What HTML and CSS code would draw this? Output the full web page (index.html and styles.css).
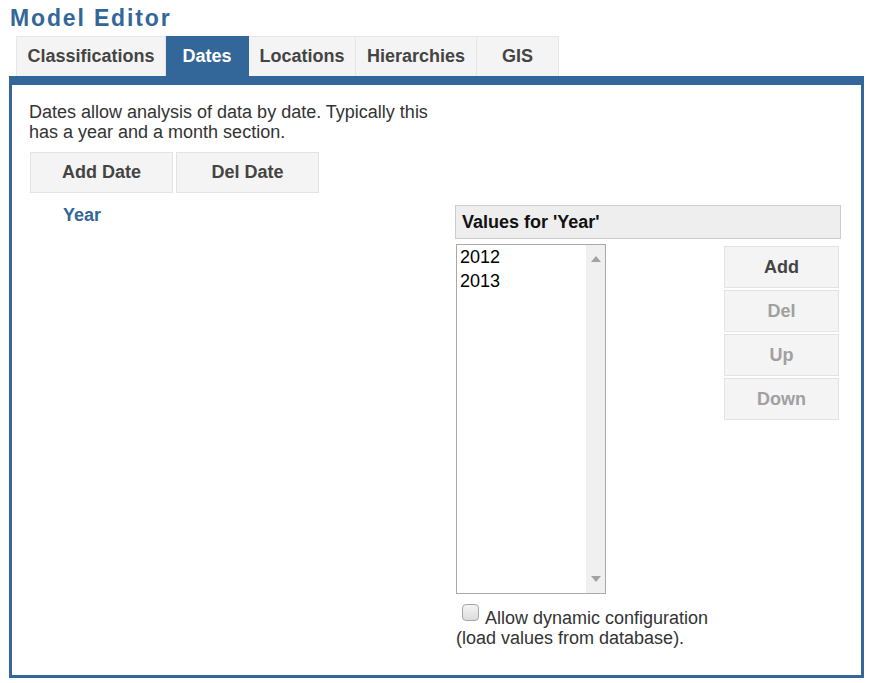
FILE: index.html
```html
<!DOCTYPE html>
<html>
<head>
<meta charset="utf-8">
<link rel="stylesheet" href="styles.css">
</head>
<body>
<h1 class="title">Model Editor</h1>
<div class="tabs">
  <div class="tab w-class">Classifications</div>
  <div class="tab tab-active w-dates">Dates</div>
  <div class="tab w-loc">Locations</div>
  <div class="tab w-hier">Hierarchies</div>
  <div class="tab w-gis">GIS</div>
</div>
<div class="panel">
  <div class="left">
    <p class="intro">Dates allow analysis of data by date. Typically this has a year and a month section.</p>
    <div class="btn-row">
      <div class="btn btn-date">Add Date</div>
      <div class="btn btn-date">Del Date</div>
    </div>
    <div class="year-link">Year</div>
  </div>
  <div class="right">
    <div class="values-head">Values for 'Year'</div>
    <div class="values-body">
      <div class="listbox">
        <div class="list-items">
          <div class="item">2012</div>
          <div class="item">2013</div>
        </div>
        <div class="scrollbar">
          <svg class="arrow" width="10" height="6" viewBox="0 0 10 6"><polygon points="0,6 10,6 5,0" fill="#a3a3a3"/></svg>
          <svg class="arrow" width="10" height="6" viewBox="0 0 10 6"><polygon points="0,0 10,0 5,6" fill="#a3a3a3"/></svg>
        </div>
      </div>
      <div class="side-btns">
        <div class="btn btn-side">Add</div>
        <div class="btn btn-side disabled">Del</div>
        <div class="btn btn-side disabled">Up</div>
        <div class="btn btn-side disabled">Down</div>
      </div>
    </div>
    <div class="dyn">
      <div class="dyn-line"><span class="checkbox"></span><span class="dyn-label">Allow dynamic configuration</span></div>
      <div>(load values from database).</div>
    </div>
  </div>
</div>
</body>
</html>
```
FILE: styles.css
```css
* { box-sizing: border-box; }
body {
  margin: 0;
  font-family: "Liberation Sans", Arial, sans-serif;
  font-size: 18px;
  color: #333;
  background: #fff;
}
.title {
  margin: 0;
  padding: 5px 0 0 10px;
  height: 31px;
  font-size: 23px;
  line-height: 26px;
  font-weight: bold;
  letter-spacing: 1.85px;
  color: #336699;
}
.tabs {
  display: flex;
  margin: 5px 0 0 16px;
  height: 40px;
}
.tab {
  height: 40px;
  display: flex;
  align-items: center;
  justify-content: center;
  background: #f4f4f4;
  border: 1px solid #e6e6e6;
  border-bottom: none;
  border-left: none;
  font-weight: bold;
  color: #444;
}
.tab:first-child { border-left: 1px solid #e6e6e6; }
.tab-active {
  background: #336699;
  border-color: #336699;
  color: #fff;
}
.w-class { width: 150px; }
.w-dates { width: 83px; }
.w-loc { width: 107px; }
.w-hier { width: 121px; }
.w-gis { width: 82px; }
.panel {
  margin-left: 9px;
  width: 855px;
  height: 602px;
  border: 3px solid #336699;
  border-top: 9px solid #336699;
  display: flex;
  padding: 17px 0 0 17px;
}
.left {
  width: 426px;
  flex: none;
}
.intro {
  margin: 0;
  width: 412px;
  line-height: 20px;
  color: #333;
}
.btn-row {
  display: flex;
  gap: 3px;
  margin: 10px 0 0 1px;
}
.btn {
  display: flex;
  align-items: center;
  justify-content: center;
  background: #f4f4f4;
  border: 1px solid #e3e3e3;
  font-weight: bold;
  color: #444;
}
.btn-date {
  width: 143px;
  height: 41px;
}
.year-link {
  margin: 12px 0 0 34px;
  font-weight: bold;
  color: #336699;
  line-height: 20px;
}
.right {
  width: 386px;
  margin-top: 103px;
}
.values-head {
  height: 34px;
  background: #eeeeee;
  border: 1px solid #cccccc;
  font-weight: bold;
  color: #111;
  padding-left: 6px;
  display: flex;
  align-items: center;
}
.values-body {
  display: flex;
  margin-top: 5px;
  padding-left: 1px;
}
.listbox {
  width: 150px;
  height: 350px;
  border: 1px solid #a9a9a9;
  display: flex;
}
.list-items {
  flex: 1;
  padding: 0 0 0 3px;
  color: #000;
}
.item {
  line-height: 24px;
}
.scrollbar {
  width: 19px;
  background: #f0f0f0;
  display: flex;
  flex-direction: column;
  justify-content: space-between;
  align-items: center;
  padding: 11px 0 11px;
}
.arrow { display: block; }
.side-btns {
  margin-left: auto;
  margin-right: 2px;
  margin-top: 2px;
  display: flex;
  flex-direction: column;
  gap: 2px;
}
.btn-side {
  width: 115px;
  height: 42px;
}
.disabled { color: #a0a0a0; }
.dyn {
  margin-top: 9px;
  padding-left: 1px;
  line-height: 20px;
  color: #333;
}
.dyn-line {
  display: flex;
  align-items: flex-start;
  gap: 6px;
  padding-left: 6px;
}
.checkbox {
  width: 17px;
  height: 17px;
  margin-top: 1px;
  border: 1px solid #a6a6a6;
  border-radius: 4px;
  background: linear-gradient(#f4f4f4, #dcdcdc);
  display: inline-block;
}
.dyn-label {
  padding-top: 5px;
}
```
